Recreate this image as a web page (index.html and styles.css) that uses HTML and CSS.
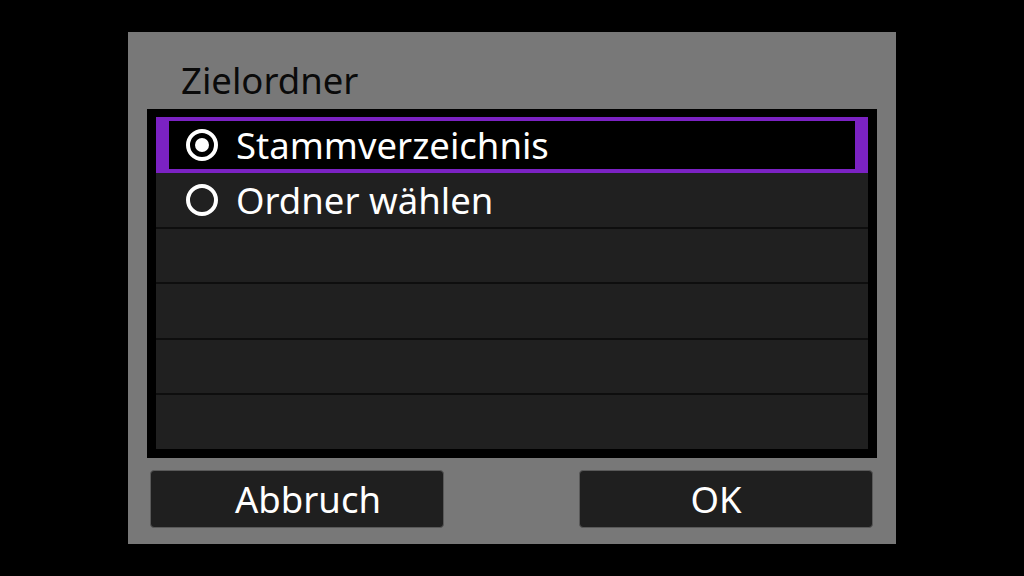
FILE: index.html
```html
<!DOCTYPE html>
<html lang="de">
<head>
    <meta charset="UTF-8">
    <meta name="viewport" content="width=device-width, initial-scale=1.0">
    <title>Zielordner</title>
    <link rel="stylesheet" href="styles.css">
</head>
<body>
    <div class="dialog">
        <div class="dialog-title">Zielordner</div>

        <div class="list-frame">
            <div class="list">
                <div class="option selected">
                    <svg class="radio" viewBox="0 0 32 32" width="32" height="32">
                        <circle cx="16" cy="16" r="14" fill="none" stroke="#fff" stroke-width="4"/>
                        <circle cx="16" cy="16" r="7" fill="#fff"/>
                    </svg>
                    <span>Stammverzeichnis</span>
                </div>
                <div class="option">
                    <svg class="radio" viewBox="0 0 32 32" width="32" height="32">
                        <circle cx="16" cy="16" r="14" fill="none" stroke="#fff" stroke-width="4"/>
                    </svg>
                    <span>Ordner wählen</span>
                </div>
                <div class="option"></div>
                <div class="option"></div>
                <div class="option"></div>
                <div class="option"></div>
            </div>
        </div>

        <div class="buttons">
            <div class="btn btn-cancel">Abbruch</div>
            <div class="btn btn-ok">OK</div>
        </div>
    </div>
</body>
</html>
```

FILE: styles.css
```css
* {
    margin: 0;
    padding: 0;
    box-sizing: border-box;
}

body {
    background-color: #000;
    font-family: 'Noto Sans', 'Open Sans', sans-serif;
    font-size: 36.5px;
    line-height: 48px;
    color: #fff;
}

.dialog {
    width: 768px;
    height: 512px;
    margin: 32px 0 0 128px;
    padding: 0 19px 16px 19px;
    background-color: #787878;
    display: flex;
    flex-direction: column;
}

.dialog-title {
    height: 77px;
    padding: 24px 0 0 34px;
    color: #0a0a0a;
}

/* 列表 */
.list-frame {
    height: 349px;
    background-color: #000;
    padding: 8px 9px 9px 9px;
}

.list {
    height: 100%;
    display: grid;
    grid-template-rows: repeat(6, 1fr);
    row-gap: 2px;
    background-color: #0e0e0e;
}

.option {
    background-color: #202020;
    display: flex;
    align-items: center;
    padding-left: 30px;
    gap: 18px;
}

.option.selected {
    background-color: #000;
    border-style: solid;
    border-color: #7b22c3;
    border-width: 4px 13px;
    padding-left: 17px;
    margin-bottom: -2px;
}

.radio {
    flex: none;
    display: block;
}

/* 按钮 */
.buttons {
    margin-top: 12px;
    height: 58px;
    padding: 0 4px 0 3px;
    display: flex;
    justify-content: space-between;
}

.btn {
    width: 294px;
    height: 58px;
    background-color: #1f1f1f;
    border: 1px solid #595959;
    border-radius: 4px;
    display: flex;
    align-items: center;
    justify-content: center;
}

.btn-cancel {
    padding-left: 22px;
}

.btn-ok {
    padding-right: 20px;
}
```
